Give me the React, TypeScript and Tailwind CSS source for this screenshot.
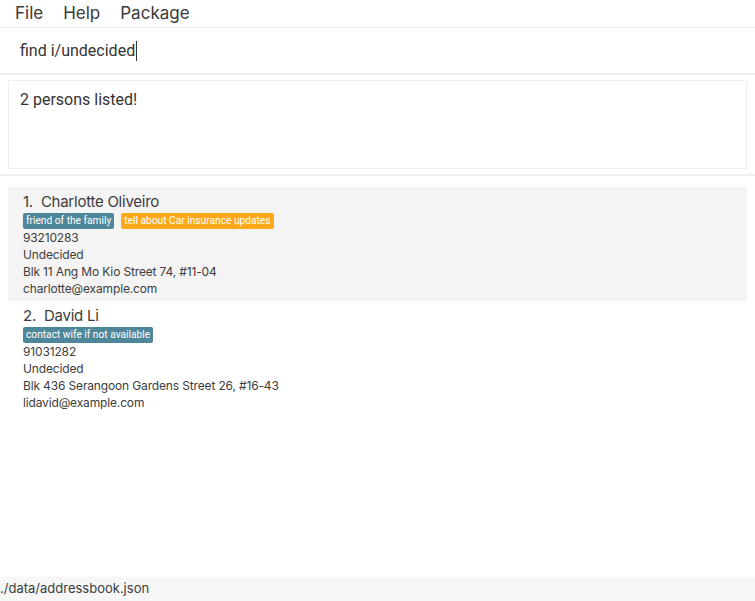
type Person = {
  name: string
  tags: { label: string; color: string }[]
  phone: string
  status: string
  address: string
  email: string
}

const persons: Person[] = [
  {
    name: 'Charlotte Oliveiro',
    tags: [
      { label: 'friend of the family', color: 'bg-[#4e8799]' },
      { label: 'tell about Car insurance updates', color: 'bg-[#ffa91a]' },
    ],
    phone: '93210283',
    status: 'Undecided',
    address: 'Blk 11 Ang Mo Kio Street 74, #11-04',
    email: 'charlotte@example.com',
  },
  {
    name: 'David Li',
    tags: [{ label: 'contact wife if not available', color: 'bg-[#4e8799]' }],
    phone: '91031282',
    status: 'Undecided',
    address: 'Blk 436 Serangoon Gardens Street 26, #16-43',
    email: 'lidavid@example.com',
  },
]

function PersonCard({ person, index }: { person: Person; index: number }) {
  return (
    <div className={`pl-[15px] pt-[5px] pb-[4px] ${index % 2 === 0 ? 'bg-[#f4f4f4]' : 'bg-white'}`}>
      <div className="font-['Inter',sans-serif] text-[15px] tracking-[-0.25px] leading-[20px] text-[#3c3c3c] whitespace-pre">
        {index + 1}.  {person.name}
      </div>
      <div className="flex gap-[7px] mt-[1px]">
        {person.tags.map((t) => (
          <span
            key={t.label}
            className={`${t.color} text-white text-[10.2px] leading-[16px] px-[3px] rounded-[2px]`}
          >
            {t.label}
          </span>
        ))}
      </div>
      <div className="font-['Inter',sans-serif] text-[12px] tracking-[-0.15px] leading-[17px] text-[#3c3c3c]">
        <div>{person.phone}</div>
        <div>{person.status}</div>
        <div>{person.address}</div>
        <div>{person.email}</div>
      </div>
    </div>
  )
}

export default function App() {
  return (
    <div className="w-[755px] h-[601px] flex flex-col bg-white font-['Roboto',sans-serif] text-[#333] overflow-hidden">
      {/* Menu bar */}
      <div className="h-[28px] flex items-center gap-[20px] pl-[15px] text-[17px] text-[#3a3a3a] font-['Inter',sans-serif] border-b border-[#f0f0f0]">
        <span>File</span>
        <span>Help</span>
        <span>Package</span>
      </div>

      {/* Command box */}
      <div className="h-[47px] flex items-center pl-[20px] border-b-2 border-[#efefef]">
        <span className="text-[16px] text-[#333]">find i/undecided</span>
        <span className="w-[1px] h-[20px] bg-[#333] ml-[1px]" />
      </div>

      {/* Result display */}
      <div className="px-[8px] pt-[5px] pb-[5px] border-b-2 border-[#efefef]">
        <div className="h-[89px] border border-[#eeeeee] pl-[11px] pt-[7px] text-[16px] text-[#333]">
          2 persons listed!
        </div>
      </div>

      {/* Person list */}
      <div className="flex-1 px-[8px] pt-[11px]">
        {persons.map((p, i) => (
          <PersonCard key={p.name} person={p} index={i} />
        ))}
      </div>

      {/* Status bar */}
      <div className="h-[24px] bg-[#f7f7f7] flex items-center font-['Inter',sans-serif] text-[13px] text-[#3c3c3c]">
        ./data/addressbook.json
      </div>
    </div>
  )
}
